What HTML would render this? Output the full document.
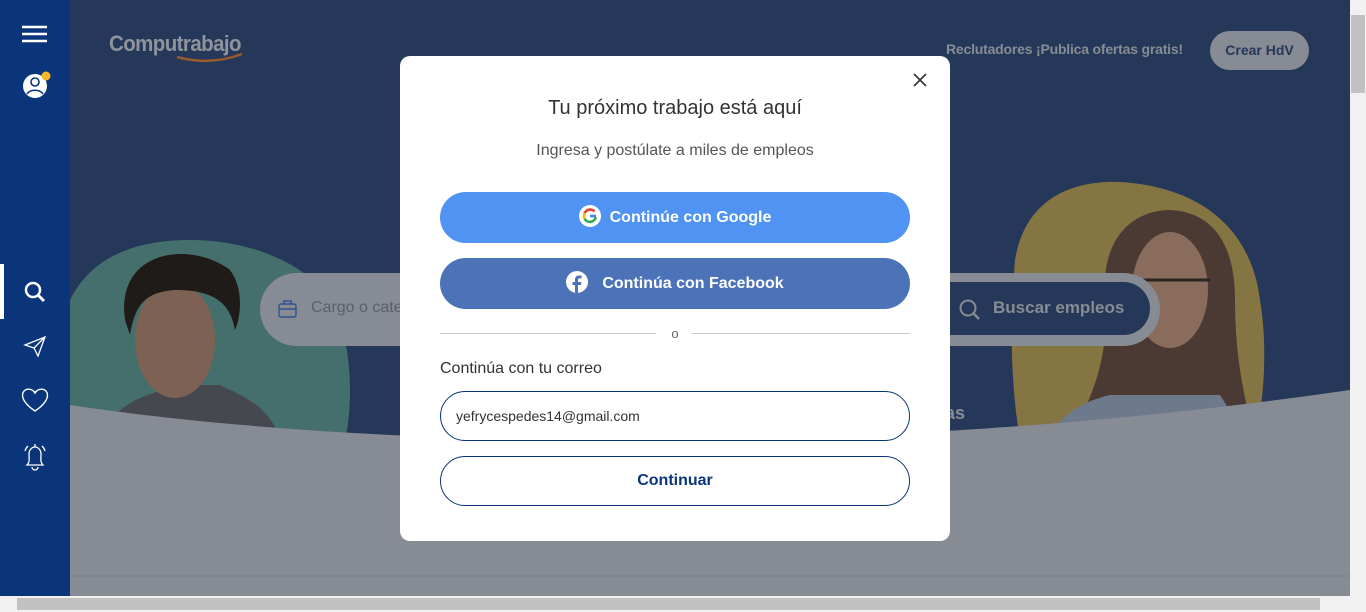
<!DOCTYPE html>
<html><head><meta charset="utf-8"><style>
*{box-sizing:border-box;margin:0;padding:0}
body{width:1366px;height:612px;overflow:hidden;font-family:"Liberation Sans",sans-serif;position:relative;background:#878b94}
.abs{position:absolute}
</style></head><body>
<div class="abs" style="left:70px;top:0;width:1280px;height:596px;background:#878b94;overflow:hidden">
<svg class="abs" style="left:0;top:0" width="1280" height="596">
<rect width="1280" height="440" fill="#253859"/>
<path d="M0 300 C20 260 60 240 120 240 C200 240 260 280 270 320 C285 370 280 420 275 440 L0 440Z" fill="#456f6c"/>
<path d="M945 260 C955 200 1000 180 1050 182 C1120 186 1180 220 1190 300 C1200 360 1190 420 1185 440 L950 440 C940 380 940 320 945 260Z" fill="#857542"/>
<path d="M35 430 C50 395 100 390 110 385 L150 385 C170 395 200 405 210 440Z" fill="#45484f"/>
<ellipse cx="105" cy="340" rx="40" ry="58" fill="#7d6253"/>
<path d="M55 320 C45 250 120 240 160 270 C175 290 170 320 165 330 C160 300 140 290 105 290 C75 292 65 305 60 335Z" fill="#1f1b19"/>
<path d="M1035 300 C1030 230 1070 210 1100 210 C1140 212 1165 240 1165 300 C1165 360 1175 400 1185 440 L1000 440 C1020 400 1040 360 1035 300Z" fill="#4a3a33"/>
<ellipse cx="1100" cy="290" rx="38" ry="58" fill="#8a6c5c"/>
<path d="M1060 280 h80" stroke="#2a2422" stroke-width="3"/>
<path d="M980 440 C990 410 1020 400 1040 395 L1150 395 C1160 410 1170 430 1175 440Z" fill="#6c7a8c"/>
<path d="M0 405 C300 450 800 460 1280 390 L1280 596 L0 596Z" fill="#878b94"/>
<line x1="0" y1="576" x2="1280" y2="576" stroke="#7b8089"/>
</svg>
<div class="abs" style="left:39px;top:31px;color:#8e939c;font-size:22px;letter-spacing:-.6px;font-weight:bold;transform:scaleX(.93);transform-origin:left">Computrabajo</div>
<svg class="abs" style="left:105px;top:50px" width="70" height="16"><path d="M2 7 Q35 16 67 4" stroke="#9a5a2e" stroke-width="2.5" fill="none"/></svg>
<div class="abs" style="left:876px;top:41px;color:#878b94;font-size:14px;font-weight:bold;letter-spacing:-.2px">Reclutadores ¡Publica ofertas gratis!</div>
<div class="abs" style="left:1140px;top:31px;width:99px;height:39px;border-radius:20px;background:#878b94;color:#253859;font-weight:bold;font-size:14px;text-align:center;line-height:39px">Crear HdV</div>
<div class="abs" style="left:190px;top:273px;width:900px;height:73px;border-radius:37px;background:#878b94"></div>
<div class="abs" style="left:241px;top:299px;color:#5a606b;font-size:16px">Cargo o cate</div>
<div class="abs" style="left:820px;top:282px;width:260px;height:53px;border-radius:27px;background:#253859"></div>
<svg class="abs" style="left:888px;top:298px" width="24" height="24"><circle cx="10" cy="10" r="7.5" stroke="#878b94" stroke-width="2" fill="none"/><line x1="15.5" y1="15.5" x2="21" y2="21" stroke="#878b94" stroke-width="2.5"/></svg>
<div class="abs" style="left:923px;top:298px;color:#878b94;font-size:17px;font-weight:bold">Buscar empleos</div>
<svg class="abs" style="left:207px;top:298px" width="22" height="22"><rect x="2" y="6" width="17" height="13" rx="2" stroke="#2b5590" fill="none" stroke-width="1.4"/><path d="M7 6V3h7v3M2 11h17" stroke="#2b5590" fill="none" stroke-width="1.4"/></svg>
<div class="abs" style="left:875px;top:403px;color:#878b94;font-size:18px;font-weight:bold">as</div>
</div>
<div class="abs" style="left:0;top:0;width:70px;height:596px;background:#0b357a"></div>
<svg class="abs" style="left:0;top:0" width="70" height="480" fill="none" stroke="#fff">
<path d="M22 27h25M22 34h25M22 41h25" stroke-width="2.5"/>
<circle cx="35" cy="86" r="12" fill="#fff" stroke="none"/>
<circle cx="35" cy="82" r="4" stroke="#0b357a" stroke-width="1.6"/>
<path d="M27 94c3-5 13-5 16 0" stroke="#0b357a" stroke-width="1.6"/>
<circle cx="46" cy="76" r="4.5" fill="#f7b928" stroke="none"/>
<rect x="0" y="264" width="4" height="55" fill="#fff" stroke="none"/>
<circle cx="33" cy="290" r="7" stroke-width="2.5"/><path d="M38 295l6 6" stroke-width="3"/>
<path d="M25 345l20-8-7 19-4-8z M34 348l11-11" stroke-width="1.3"/>
<path d="M35 411c-20-13-12-25-3-21 2 1 3 3 3 3s1-2 3-3c9-4 17 8-3 21z" stroke-width="1.4"/>
<path d="M27 465c3-3 2-6 2-11 0-4 3-7 6-7s6 3 6 7c0 5-1 8 2 11z M32 467a3 3 0 0 0 6 0 M25 451a10 10 0 0 1 3-5 M45 451a10 10 0 0 0-3-5 M35 447v-3" stroke-width="1.3"/>
</svg>
<div class="abs" style="left:1350px;top:0;width:16px;height:596px;background:#f1f1f1"></div>
<div class="abs" style="left:1351px;top:15px;width:14px;height:78px;background:#c1c1c1"></div>
<div class="abs" style="left:0;top:596px;width:1366px;height:16px;background:#f1f1f1"></div>
<div class="abs" style="left:17px;top:598px;width:1303px;height:12px;background:#c1c1c1"></div>
<div class="abs" style="left:400px;top:56px;width:550px;height:485px;background:#fff;border-radius:10px">
<svg class="abs" style="left:512px;top:16px" width="16" height="16"><path d="M2 2l12 12M14 2L2 14" stroke="#333" stroke-width="1.6"/></svg>
<div class="abs" style="left:0;top:41px;width:550px;text-align:center;font-size:20px;color:#333">Tu próximo trabajo está aquí</div>
<div class="abs" style="left:0;top:86px;width:550px;text-align:center;font-size:16px;color:#555">Ingresa y postúlate a miles de empleos</div>
<div class="abs" style="left:40px;top:136px;width:470px;height:51px;border-radius:26px;background:#5093f3;color:#fff;font-weight:bold;font-size:16px;text-align:center;line-height:51px"><span style="display:inline-block;width:22px;height:22px;border-radius:50%;background:#fff;vertical-align:-5px;margin-right:9px;position:relative"><svg width="22" height="22" viewBox="0 0 22 22" style="position:absolute;left:0;top:0"><path d="M17 11h-6" stroke="#4285f4" stroke-width="2.6" fill="none"/><path d="M15.5 6.5A6 6 0 0 0 5.6 8.3" stroke="#ea4335" stroke-width="2.6" fill="none"/><path d="M5.6 8.3a6 6 0 0 0 0 5.4" stroke="#fbbc05" stroke-width="2.6" fill="none"/><path d="M5.6 13.7A6 6 0 0 0 16.8 12" stroke="#34a853" stroke-width="2.6" fill="none"/></svg></span>Continúe con Google</div>
<div class="abs" style="left:40px;top:202px;width:470px;height:51px;border-radius:26px;background:#4c73b8;color:#fff;font-weight:bold;font-size:16px;text-align:center;line-height:51px"><span style="display:inline-block;width:22px;height:22px;border-radius:50%;background:#fff;vertical-align:-5px;margin-right:14px;overflow:hidden;position:relative"><svg width="22" height="22" viewBox="0 0 22 22" style="position:absolute;left:0;top:0"><path d="M12 22v-8h3l.5-3H12V9c0-1 .4-1.6 1.7-1.6H15.6V4.7C15 4.6 14 4.5 13 4.5c-2.6 0-4 1.5-4 4.2V11H6.5v3H9v8z" fill="#4c73b8"/></svg></span>Continúa con Facebook</div>
<div class="abs" style="left:40px;top:277px;width:216px;height:1px;background:#c8c8c8"></div>
<div class="abs" style="left:292px;top:277px;width:218px;height:1px;background:#c8c8c8"></div>
<div class="abs" style="left:0;top:270px;width:550px;text-align:center;font-size:13px;color:#666">o</div>
<div class="abs" style="left:40px;top:304px;font-size:16px;color:#333">Continúa con tu correo</div>
<div class="abs" style="left:40px;top:335px;width:470px;height:50px;border-radius:25px;border:1px solid #0b357a;font-size:14px;color:#333;line-height:48px;padding-left:15px">yefrycespedes14@gmail.com</div>
<div class="abs" style="left:40px;top:400px;width:470px;height:50px;border-radius:25px;border:1px solid #0b357a;font-size:16px;font-weight:bold;color:#0b357a;text-align:center;line-height:48px">Continuar</div>
</div>
</body></html>
